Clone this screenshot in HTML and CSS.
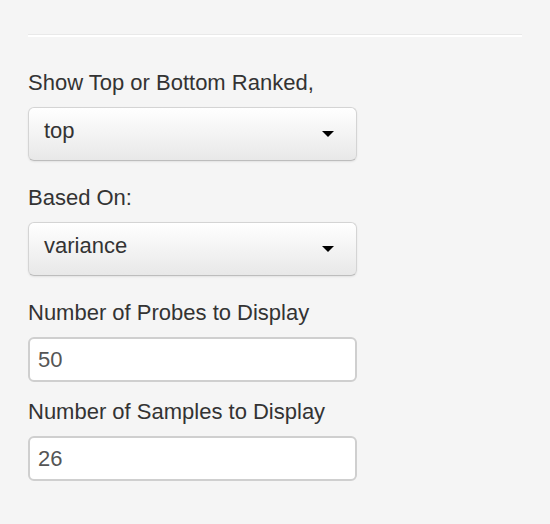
FILE: index.html
```html
<!DOCTYPE html>
<html>
<head>
<meta charset="utf-8">
<link rel="stylesheet" href="styles.css">
</head>
<body>
<div class="well">
  <hr class="divider">
  <label class="label">Show Top or Bottom Ranked,</label>
  <div class="select">
    <span class="select-text">top</span>
    <svg class="caret" width="12" height="6" viewBox="0 0 12 6"><polygon points="0,0 12,0 6,6" fill="#000"/></svg>
  </div>
  <label class="label">Based On:</label>
  <div class="select">
    <span class="select-text">variance</span>
    <svg class="caret" width="12" height="6" viewBox="0 0 12 6"><polygon points="0,0 12,0 6,6" fill="#000"/></svg>
  </div>
  <label class="label">Number of Probes to Display</label>
  <input class="input" type="text" value="50">
  <label class="label">Number of Samples to Display</label>
  <input class="input" type="text" value="26">
</div>
</body>
</html>
```
FILE: styles.css
```css
html, body {
  margin: 0;
  padding: 0;
  background: #f5f5f5;
}
body {
  font-family: "Liberation Sans", Arial, sans-serif;
  font-size: 22px;
  color: #333;
}
.well {
  padding: 0 28px;
  display: flex;
  flex-direction: column;
  align-items: flex-start;
}
.divider {
  align-self: stretch;
  margin: 34px 0 31px;
  height: 0;
  border: 0;
  border-top: 1px solid #e9e9e9;
  border-bottom: 2px solid #fff;
}
.label {
  display: block;
  line-height: 30px;
  margin-bottom: 9px;
}
.select {
  box-sizing: border-box;
  width: 329px;
  height: 54px;
  margin-bottom: 22px;
  display: flex;
  align-items: flex-start;
  padding: 8px 15px 0;
  border: 1px solid #d4d4d4;
  border-bottom-color: #bdbdbd;
  border-radius: 6px;
  background: linear-gradient(#ffffff, #e8e8e8);
  box-shadow: 0 1px 2px rgba(0,0,0,0.08), inset 0 1px 0 rgba(255,255,255,0.3);
  color: #333;
}
.select-text {
  line-height: 30px;
}
.caret {
  display: block;
  margin-left: auto;
  margin-right: 7px;
  margin-top: 15px;
}
.input {
  box-sizing: border-box;
  width: 329px;
  height: 45px;
  margin: 0 0 15px;
  padding: 0 8px;
  border: 2px solid #cfcfcf;
  border-radius: 6px;
  background: #fff;
  font-family: "Liberation Sans", Arial, sans-serif;
  font-size: 22px;
  color: #555;
  outline: none;
}
```
